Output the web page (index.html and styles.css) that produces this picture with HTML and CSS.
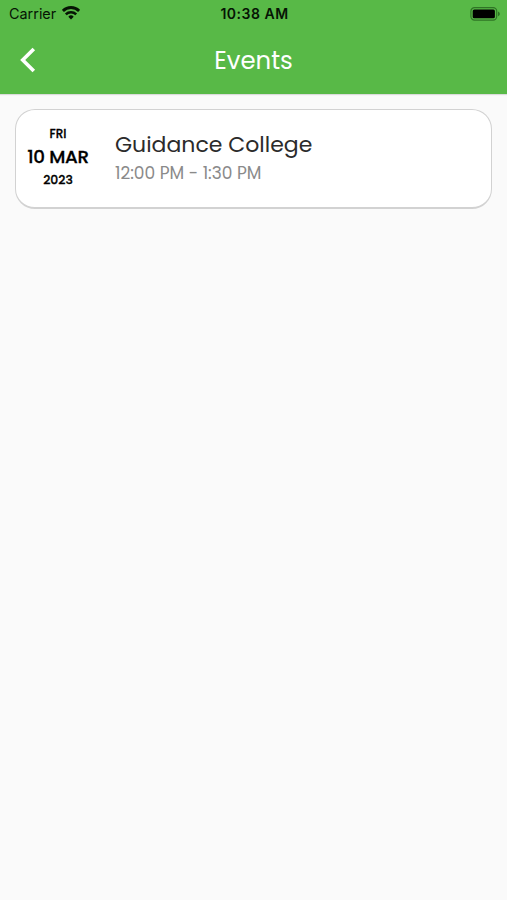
FILE: index.html
```
<!DOCTYPE html>
<html lang="en">
<head>
    <meta charset="UTF-8">
    <meta name="viewport" content="width=device-width, initial-scale=1.0">
    <title>Events</title>
    <link rel="stylesheet" href="styles.css">
</head>
<body>
    <header class="header">
        <div class="status-bar">
            <div class="carrier">
                <span>Carrier</span>
                <svg class="wifi" width="18" height="14" viewBox="0 0 18 14" fill="none" stroke="#061404" stroke-width="2.9">
                    <path d="M0.9 4.9a11.5 11.5 0 0 1 16.2 0"/>
                    <path d="M3.8 8.3a7.4 7.4 0 0 1 10.4 0" stroke-width="2.5"/>
                    <path d="M9 13.6l-2.7-2.9a3.8 3.8 0 0 1 5.4 0z" fill="#061404" stroke="none"/>
                </svg>
            </div>
            <div class="clock">10:38 AM</div>
            <svg class="battery" width="30" height="14" viewBox="0 0 30 14">
                <rect x="0.9" y="0.7" width="25.8" height="12.4" rx="3.6" fill="none" stroke="#2f7426" stroke-width="1.2"/>
                <rect x="2.7" y="2.5" width="22.2" height="8.8" rx="1.6" fill="#000"/>
                <path d="M28 4.6c2.4 1 2.4 3.6 0 4.6z" fill="#2f7426"/>
            </svg>
        </div>
        <div class="nav-bar">
            <button class="back" aria-label="Back">
                <svg width="18" height="26" viewBox="0 0 18 26" fill="none" stroke="#fff" stroke-width="3.6">
                    <path d="M15.8 1.9L4.7 13l11.1 11.1"/>
                </svg>
            </button>
            <h1 class="title">Events</h1>
        </div>
    </header>

    <main class="events">
        <article class="event-card">
            <div class="event-date">
                <span class="weekday">FRI</span>
                <span class="day">10 MAR</span>
                <span class="year">2023</span>
            </div>
            <div class="event-info">
                <h2 class="event-name">Guidance College</h2>
                <p class="event-time">12:00 PM - 1:30 PM</p>
            </div>
        </article>
    </main>
</body>
</html>
```
FILE: styles.css
```
* { margin: 0; padding: 0; box-sizing: border-box; }
body {
    font-family: Poppins, Inter, sans-serif;
    background: #fafafa;
    min-height: 100vh;
    color: #000;
}
.header {
    height: 94px;
    background: #58b947;
    box-shadow: 0 1px 1px rgba(0,0,0,0.12);
}
.status-bar {
    display: grid;
    grid-template-columns: 1fr auto 1fr;
    align-items: center;
    height: 27px;
    padding: 0 7px 0 9px;
    font-family: Inter, sans-serif;
    font-size: 14.4px;
    color: #061404;
}
.carrier { display: flex; align-items: center; gap: 6px; }
.wifi { margin-top: -2px; }
.clock { font-size: 14px; font-weight: 600; letter-spacing: 0.5px; }
.battery { justify-self: end; }
.nav-bar {
    display: grid;
    grid-template-columns: 1fr auto 1fr;
    align-items: center;
    height: 66px;
    padding: 0 18px;
}
.back {
    display: flex;
    width: 18px;
    background: none;
    border: none;
    cursor: pointer;
}
.title { font-size: 24.4px; font-weight: 400; color: #fff; }
.events { padding: 15px 15px 0 15px; }
.event-card {
    display: flex;
    align-items: center;
    height: 100px;
    background: #fff;
    border: 1px solid #d2d2d2;
    border-width: 1px 1px 2px;
    border-radius: 20px;
}
.event-date {
    display: flex;
    flex-direction: column;
    align-items: center;
    width: 84px;
    padding-bottom: 3px;
    font-weight: 500;
    -webkit-text-stroke: 0.3px #000;
}
.weekday { font-size: 12px; line-height: 20px; }
.day { font-size: 18.3px; line-height: 26px; letter-spacing: -0.3px; }
.year { font-size: 12.4px; line-height: 20px; }
.event-info { padding-left: 15px; }
.event-name { font-size: 22px; font-weight: 400; line-height: 30px; color: #2b2b2b; }
.event-time { font-size: 17px; line-height: 27px; color: #8a8a8a; }
```
